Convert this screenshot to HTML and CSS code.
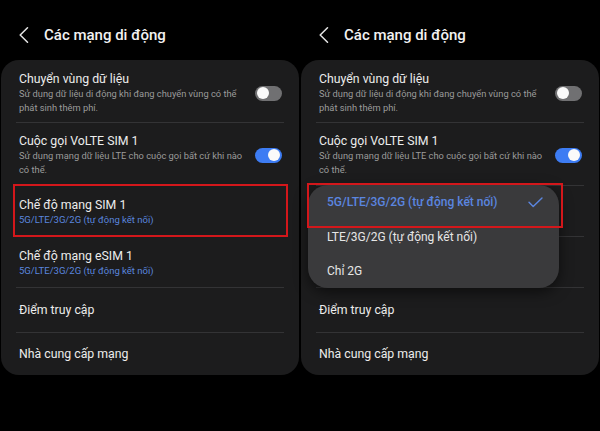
FILE: index.html
```html
<!DOCTYPE html>
<html lang="vi">
<head>
<meta charset="utf-8">
<title>Các mạng di động</title>
<link rel="stylesheet" href="styles.css">
</head>
<body>
<div class="screen">
  <section class="panel">
    <header class="appbar">
      <svg class="back" width="10" height="16" viewBox="0 0 10 16"><path d="M8.5 0.8 L1.2 8 L8.5 15.2" fill="none" stroke="#e6e6e6" stroke-width="1.5" stroke-linecap="round" stroke-linejoin="round"/></svg>
      <h1 class="heading">Các mạng di động</h1>
    </header>
    <div class="card">
      <div class="row row-two">
        <div class="text">
          <div class="title">Chuyển vùng dữ liệu</div>
          <div class="sub">Sử dụng dữ liệu di động khi đang chuyển vùng có thể phát sinh thêm phí.</div>
        </div>
        <span class="switch"></span>
      </div>
      <div class="row row-two">
        <div class="text">
          <div class="title">Cuộc gọi VoLTE SIM 1</div>
          <div class="sub">Sử dụng mạng dữ liệu LTE cho cuộc gọi bất cứ khi nào có thể.</div>
        </div>
        <span class="switch on"></span>
      </div>
      <div class="row row-value">
        <div class="text">
          <div class="title">Chế độ mạng SIM 1</div>
          <div class="value">5G/LTE/3G/2G (tự động kết nối)</div>
        </div>
      </div>
      <div class="row row-value">
        <div class="text">
          <div class="title">Chế độ mạng eSIM 1</div>
          <div class="value">5G/LTE/3G/2G (tự động kết nối)</div>
        </div>
      </div>
      <div class="row row-single row-a">
        <div class="title">Điểm truy cập</div>
      </div>
      <div class="row row-single row-b">
        <div class="title">Nhà cung cấp mạng</div>
      </div>
    </div>
    <div class="highlight hl-left"></div>
  </section>

  <section class="panel">
    <header class="appbar">
      <svg class="back" width="10" height="16" viewBox="0 0 10 16"><path d="M8.5 0.8 L1.2 8 L8.5 15.2" fill="none" stroke="#e6e6e6" stroke-width="1.5" stroke-linecap="round" stroke-linejoin="round"/></svg>
      <h1 class="heading">Các mạng di động</h1>
    </header>
    <div class="card">
      <div class="row row-two">
        <div class="text">
          <div class="title">Chuyển vùng dữ liệu</div>
          <div class="sub">Sử dụng dữ liệu di động khi đang chuyển vùng có thể phát sinh thêm phí.</div>
        </div>
        <span class="switch"></span>
      </div>
      <div class="row row-two">
        <div class="text">
          <div class="title">Cuộc gọi VoLTE SIM 1</div>
          <div class="sub">Sử dụng mạng dữ liệu LTE cho cuộc gọi bất cứ khi nào có thể.</div>
        </div>
        <span class="switch on"></span>
      </div>
      <div class="row row-value">
        <div class="text">
          <div class="title">Chế độ mạng SIM 1</div>
          <div class="value">5G/LTE/3G/2G (tự động kết nối)</div>
        </div>
      </div>
      <div class="row row-value">
        <div class="text">
          <div class="title">Chế độ mạng eSIM 1</div>
          <div class="value">5G/LTE/3G/2G (tự động kết nối)</div>
        </div>
      </div>
      <div class="row row-single row-a">
        <div class="title">Điểm truy cập</div>
      </div>
      <div class="row row-single row-b">
        <div class="title">Nhà cung cấp mạng</div>
      </div>
    </div>
    <div class="menu">
      <div class="option selected">
        <span>5G/LTE/3G/2G (tự động kết nối)</span>
        <svg class="check" width="15" height="11" viewBox="0 0 15 11"><path d="M1 5.2 L5.2 9.6 L14 1" fill="none" stroke="#5b86e0" stroke-width="1.4" stroke-linecap="round" stroke-linejoin="round"/></svg>
      </div>
      <div class="option">LTE/3G/2G (tự động kết nối)</div>
      <div class="option">Chỉ 2G</div>
    </div>
    <div class="highlight hl-right"></div>
  </section>
</div>
</body>
</html>
```

FILE: styles.css
```css
* { box-sizing: border-box; }

html, body {
  margin: 0;
  padding: 0;
  background: #000;
}

body {
  font-family: Roboto, "Noto Sans", "Liberation Sans", sans-serif;
  color: #ececec;
  width: 600px;
  height: 431px;
  overflow: hidden;
}

.screen {
  display: flex;
  width: 600px;
  height: 431px;
}

.panel {
  position: relative;
  width: 300px;
  flex: 0 0 300px;
}

.appbar {
  display: flex;
  align-items: center;
  height: 60px;
  padding: 10px 0 0 19px;
}

.back {
  flex: 0 0 auto;
  display: block;
}

.heading {
  margin: 0 0 0 15px;
  font-size: 15px;
  font-weight: 500;
  color: #f2f2f2;
}

.card {
  margin: 0 1px;
  background: #1c1c1d;
  border-radius: 18px;
  height: 315px;
}

.row {
  display: flex;
  align-items: center;
  margin: 0 15px;
  padding: 0 2px 0 3px;
}

.row + .row {
  border-top: 1px solid #333335;
}

.text {
  flex: 1 1 auto;
  min-width: 0;
}

.title {
  font-size: 12.3px;
  line-height: 16px;
  color: #ececec;
}

.sub {
  font-size: 9.3px;
  line-height: 14px;
  color: #9b9b9b;
  padding-right: 9px;
}

.value {
  font-size: 9.5px;
  line-height: 14px;
  color: #5a86df;
}

.row-two {
  padding-top: 11px;
  padding-bottom: 7px;
}

.row-two + .row-two {
  padding-top: 10px;
  padding-bottom: 8px;
}

.row-value {
  padding-top: 11px;
  padding-bottom: 9px;
}

.row-a { height: 45px; }
.row-b { height: 43px; }

.switch {
  position: relative;
  flex: 0 0 27px;
  width: 27px;
  height: 15px;
  border-radius: 8px;
  background: #707072;
}

.switch::after {
  content: "";
  position: absolute;
  top: 1.5px;
  left: 2px;
  width: 12px;
  height: 12px;
  border-radius: 50%;
  background: #fafafa;
}

.switch.on {
  background: #3d7cf3;
}

.switch.on::after {
  left: 13px;
}

.highlight {
  position: absolute;
  border: 2.5px solid #d3171b;
  pointer-events: none;
}

.hl-left {
  left: 13px;
  top: 184px;
  width: 275px;
  height: 53px;
}

.hl-right {
  left: 7px;
  top: 183px;
  width: 256px;
  height: 45px;
}

.menu {
  position: absolute;
  left: 8px;
  top: 185px;
  width: 251px;
  height: 103px;
  background: #3a3a3c;
  border-radius: 20px;
  box-shadow: 0 4px 14px rgba(0, 0, 0, 0.55);
  padding: 0 16px 0 19px;
  display: flex;
  flex-direction: column;
}

.option {
  flex: 1 1 0;
  display: flex;
  align-items: center;
  justify-content: space-between;
  font-size: 12px;
  color: #e6e6e6;
}

.option.selected {
  color: #5b86e0;
  font-weight: 500;
  padding-bottom: 1px;
}

.check {
  display: block;
}
```
